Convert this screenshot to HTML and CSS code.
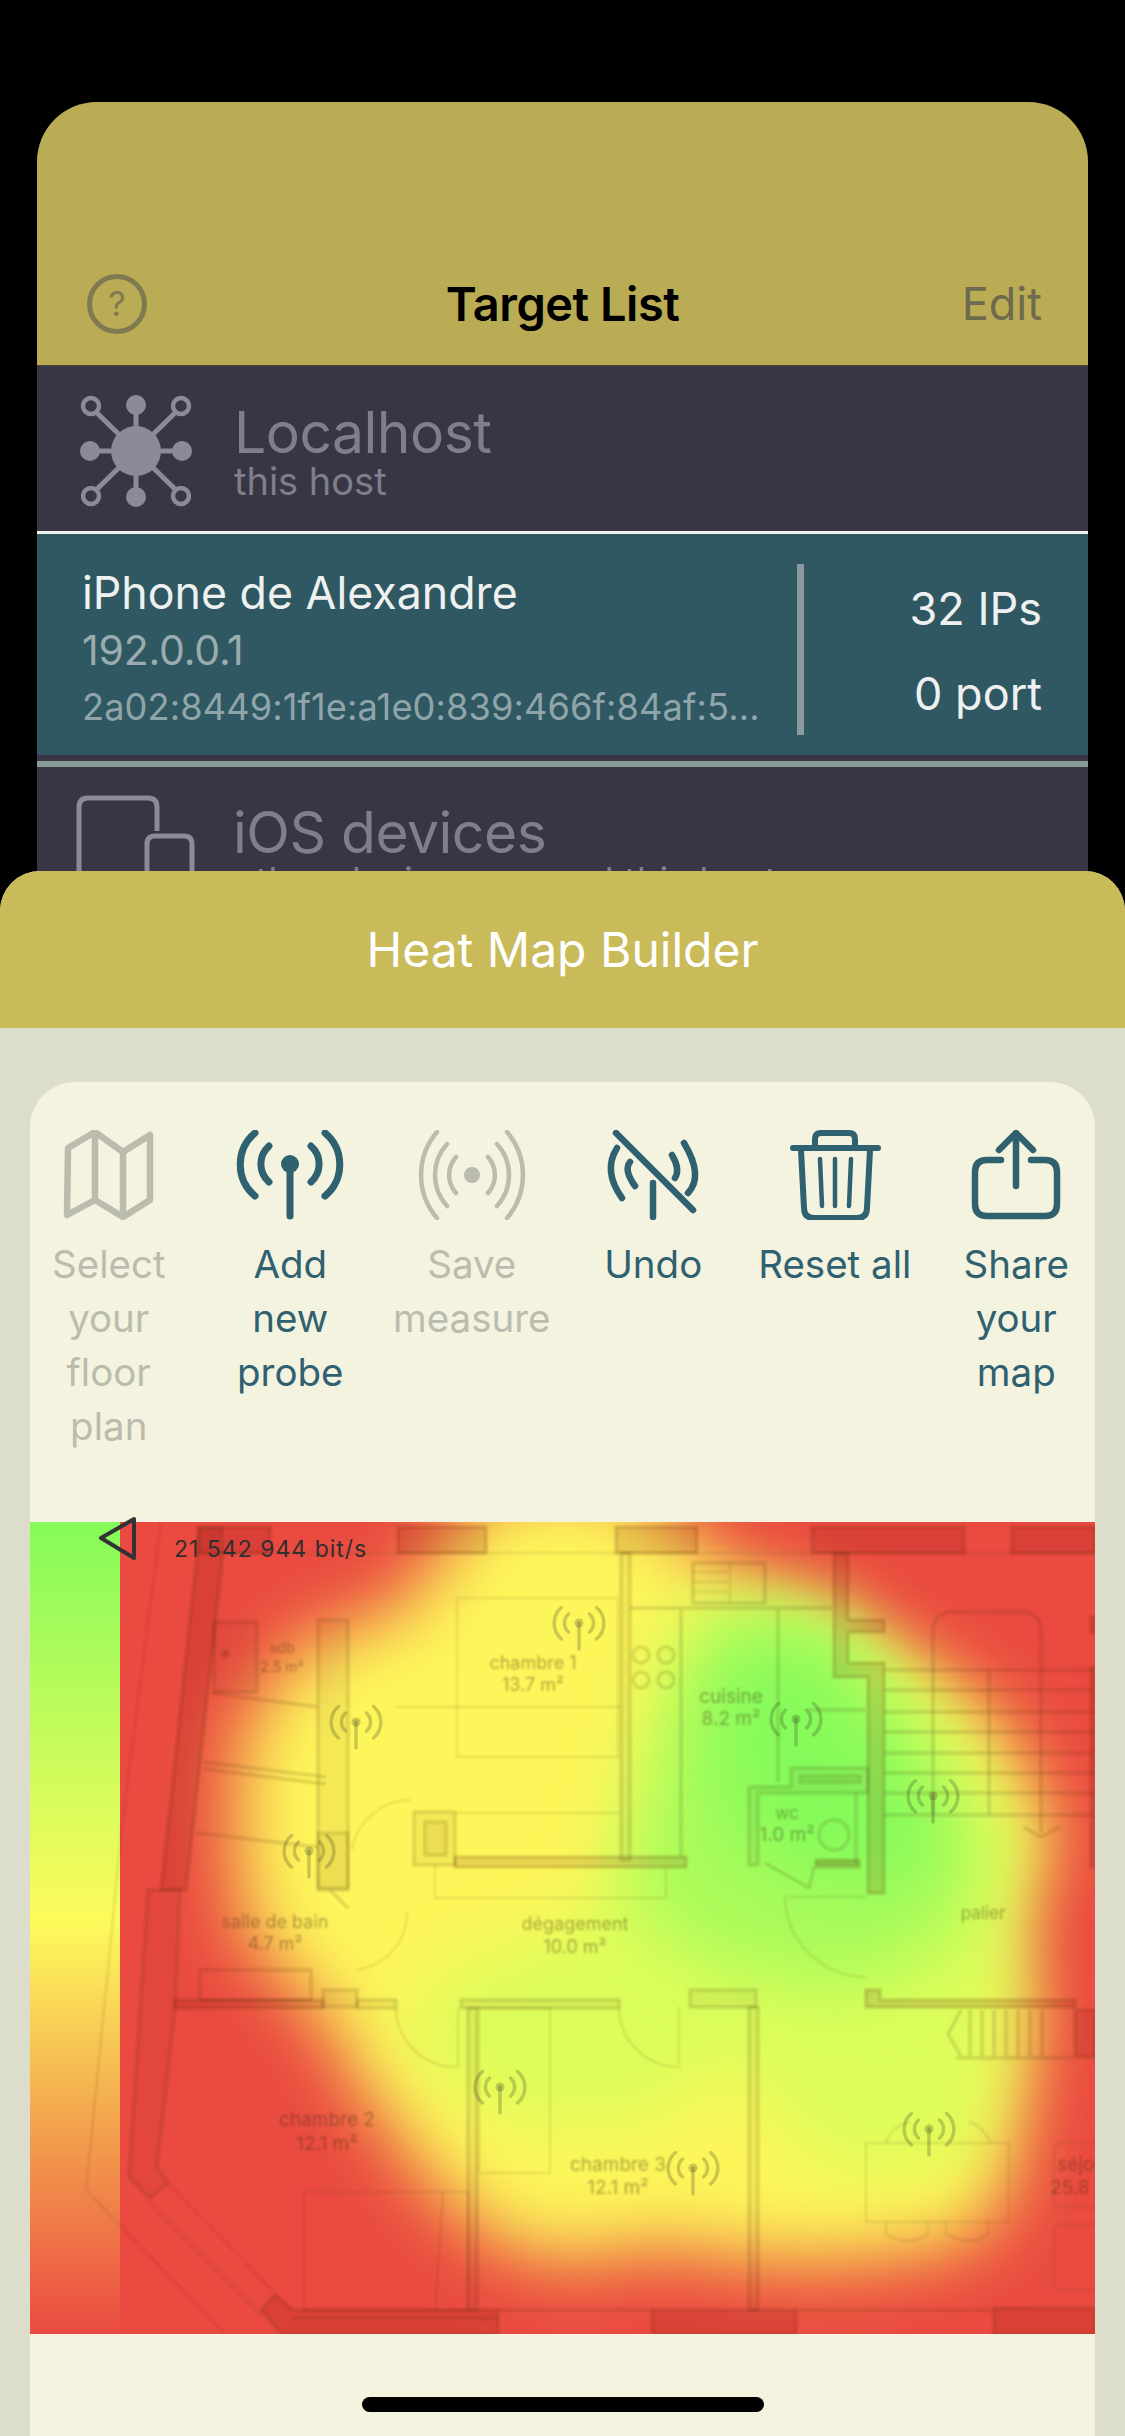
FILE: index.html
```html
<!DOCTYPE html>
<html lang="en">
<head>
<meta charset="utf-8">
<title>Heat Map Builder</title>
<link rel="stylesheet" href="styles.css">
</head>
<body>
<svg class="defs" width="0" height="0" aria-hidden="true">
  <defs>
    <g id="probe">
      <path d="M-35,-31 A41,41 0 0 0 -35,32 M35,-31 A41,41 0 0 1 35,32 M-21,-18 A24,24 0 0 0 -21,18 M21,-18 A24,24 0 0 1 21,18 M0,0 V52" fill="none" stroke="currentColor" stroke-width="7" stroke-linecap="round"/>
      <circle r="9" fill="currentColor"/>
    </g>
  </defs>
</svg>

<main class="behind">
  <header class="nav">
    <div class="help">?</div>
    <h1 class="nav-title">Target List</h1>
    <div class="edit">Edit</div>
  </header>
  <section class="row host">
    <svg class="row-icon" viewBox="0 0 116 116">
      <g class="ico-line">
        <path d="M58,58 L58,20 M58,58 L58,96 M58,58 L20,58 M58,58 L96,58 M58,58 L16,17 M58,58 L100,17 M58,58 L16,99 M58,58 L100,99"/>
        <circle class="ring" cx="13" cy="13" r="8"/><circle class="ring" cx="103" cy="13" r="8"/>
        <circle class="ring" cx="13" cy="103" r="8"/><circle class="ring" cx="103" cy="103" r="8"/>
      </g>
      <circle class="ico-fill" cx="58" cy="58" r="25"/>
      <circle class="ico-fill" cx="58" cy="12" r="10"/><circle class="ico-fill" cx="58" cy="104" r="10"/>
      <circle class="ico-fill" cx="12" cy="58" r="10"/><circle class="ico-fill" cx="104" cy="58" r="10"/>
    </svg>
    <div class="row-text">
      <div class="row-title">Localhost</div>
      <div class="row-sub">this host</div>
    </div>
  </section>
  <section class="target">
    <div class="target-info">
      <div class="target-name">iPhone de Alexandre</div>
      <div class="target-ip">192.0.0.1</div>
      <div class="target-addr">2a02:8449:1f1e:a1e0:839:466f:84af:5...</div>
    </div>
    <div class="target-count">
      <div>32 IPs</div>
      <div>0 port</div>
    </div>
  </section>
  <div class="rule"></div>
  <section class="row devices">
    <svg class="row-icon" viewBox="0 0 120 116">
      <path class="ico-line" d="M3,110 V12 Q3,3 12,3 H72 Q81,3 81,12 V36"/>
      <path class="ico-line" d="M71,110 V49 Q71,41 79,41 H108 Q116,41 116,49 V110"/>
    </svg>
    <div class="row-text">
      <div class="row-title">iOS devices</div>
      <div class="row-sub">other devices around this host</div>
    </div>
  </section>
</main>

<section class="sheet">
  <header class="sheet-head">Heat Map Builder</header>
  <div class="sheet-body">
    <div class="card">
      <div class="tools">
        <div class="tool off">
          <svg class="tool-icon" viewBox="0 0 120 90">
            <path d="M19,18 L46,2 L74,22 L101,5 V70 L74,87 L46,70 L18,85 Z M46,2 V70 M74,22 V87" fill="none" stroke="currentColor" stroke-width="6.5" stroke-linejoin="round"/>
          </svg>
          <div class="tool-label">Select<br>your<br>floor<br>plan</div>
        </div>
        <div class="tool">
          <svg class="tool-icon" viewBox="-60 -34 120 90"><use href="#probe"/></svg>
          <div class="tool-label">Add<br>new<br>probe</div>
        </div>
        <div class="tool off">
          <svg class="tool-icon" viewBox="-60 -45 120 90">
            <path d="M-35,-43 A66,66 0 0 0 -35,43 M35,-43 A66,66 0 0 1 35,43 M-25,-31 A46,46 0 0 0 -25,31 M25,-31 A46,46 0 0 1 25,31 M-16,-18 A27,27 0 0 0 -16,18 M16,-18 A27,27 0 0 1 16,18" fill="none" stroke="currentColor" stroke-width="4.5" stroke-linecap="round"/>
            <circle r="8" fill="currentColor"/>
          </svg>
          <div class="tool-label">Save<br>measure</div>
        </div>
        <div class="tool">
          <svg class="tool-icon" viewBox="0 0 120 90">
            <g fill="none" stroke="currentColor" stroke-width="6.5" stroke-linecap="round">
              <path d="M23,3 L100,80 M60,53 V87"/>
              <path d="M24,18 Q9.5,41 29,68 M37,32 Q30.5,40 42,56 M91,13 Q111,46 95,63 M79,25 Q87.5,39.5 82,48"/>
            </g>
          </svg>
          <div class="tool-label">Undo</div>
        </div>
        <div class="tool">
          <svg class="tool-icon" viewBox="0 0 120 90">
            <g fill="none" stroke="currentColor" stroke-linecap="round">
              <path stroke-width="6" d="M18,18 H103 M40,16 V9 Q40,3 46,3 H74 Q80,3 80,9 V16 M26,20 L29,78 Q29,88 39,88 H82 Q92,88 92,78 L95,20"/>
              <path stroke-width="4.5" d="M45,29 L47,76 M60,29 V76 M76,29 L74,76"/>
            </g>
          </svg>
          <div class="tool-label">Reset all</div>
        </div>
        <div class="tool">
          <svg class="tool-icon" viewBox="0 0 120 90">
            <g fill="none" stroke="currentColor" stroke-width="6.5" stroke-linecap="round" stroke-linejoin="round">
              <path d="M45,30 H31 Q19,30 19,42 V74 Q19,86 31,86 H89 Q101,86 101,74 V42 Q101,30 89,30 H75"/>
              <path d="M60,5 V56 M43,20 L60,3 L77,20"/>
            </g>
          </svg>
          <div class="tool-label">Share<br>your<br>map</div>
        </div>
      </div>

      <div class="map">
        <div class="scale"></div>
        <svg class="heat" viewBox="0 0 1065 812">
          <defs>
            <clipPath id="heat-clip"><rect x="90" y="0" width="975" height="812"/></clipPath>
            <filter id="b1" x="-30%" y="-30%" width="160%" height="160%"><feGaussianBlur stdDeviation="36"/></filter>
            <filter id="b2" x="-30%" y="-30%" width="160%" height="160%"><feGaussianBlur stdDeviation="34"/></filter>
            <filter id="soft"><feGaussianBlur stdDeviation="1.2"/></filter>
          </defs>
          <g clip-path="url(#heat-clip)">
            <rect x="90" width="975" height="812" fill="#ea4a40"/>
            <polygon filter="url(#b1)" fill="#fdf65a" points="462,-40 600,-40 700,50 840,120 960,190 1024,311 980,411 1003,491 990,591 970,691 926,725 818,741 746,741 620,725 548,741 470,725 398,658 327,558 291,491 215,411 205,311 210,211 272,121 368,88"/>
            <polygon filter="url(#b2)" fill="#dcfd5a" points="610,240 650,80 790,80 900,170 985,300 985,460 950,640 800,650 700,540 620,600 480,600 370,520 420,450 560,400"/>
            <polygon filter="url(#b2)" fill="#a8fb5a" points="640,180 700,90 800,100 880,200 950,330 920,420 820,470 680,440 600,380"/>
            <polygon filter="url(#b2)" fill="#84fb5a" points="690,130 790,130 850,220 910,300 890,360 780,360 690,290"/>
          </g>
          <g filter="url(#soft)">
            <!-- exterior thin outline -->
            <path class="thin" d="M131,0 L91,311 L77,458 L56,668 L195,812 M138,661 L245,771 M116,678 L231,793"/>
            <!-- left wall -->
            <polygon class="thick" points="170,6 192,6 192,40 156,368 131,368"/>
            <polygon class="wall" points="118,368 150,368 145,486 127,645 138,661 120,676 99,655"/>
            <!-- top strip -->
            <path class="thin" d="M168,31 H1065"/>
            <rect class="thick" x="168" y="5" width="72" height="26"/>
            <rect class="thick" x="368" y="5" width="88" height="26"/>
            <rect class="thick" x="586" y="5" width="81" height="26"/>
            <rect class="thick" x="782" y="5" width="152" height="26"/>
            <rect class="thick" x="982" y="5" width="83" height="26"/>
            <!-- bathroom side rooms -->
            <rect class="wall" x="184" y="100" width="43" height="70"/>
            <circle class="thick" cx="195" cy="132" r="3"/>
            <path class="line" d="M181,171 L288,185 M174,240 L296,255 M174,247 L296,262 M166,311 L288,325"/>
            <rect class="wall" x="288" y="98" width="30" height="270"/>
            <rect class="wall" x="288" y="311" width="30" height="55"/>
            <path class="line" d="M300,368 L318,386"/>
            <path class="thin" d="M381,278 A60,60 0 0 0 322,328 M377,390 A58,58 0 0 1 327,448"/>
            <path class="thin" d="M365,185 H590"/>
            <!-- chimney and corridor wall -->
            <rect class="wall" x="384" y="290" width="41" height="53"/>
            <rect class="wall" x="395" y="300" width="21" height="33"/>
            <rect class="thick" x="425" y="335" width="231" height="10"/>
            <path class="thin" d="M425,291 H590 M405,343 V376 H636 V345"/>
            <rect class="thin" x="427" y="76" width="161" height="159"/>
            <!-- kitchen -->
            <rect class="wall" x="591" y="31" width="9" height="307"/>
            <path class="line" d="M600,86 H802 M651,86 V335 M748,86 V260"/>
            <rect class="line" x="663" y="41" width="72" height="40"/>
            <path class="thin" d="M663,50 H700 M663,60 H700 M663,70 H700 M700,41 V81"/>
            <circle class="line" cx="611" cy="133" r="8"/><circle class="line" cx="636" cy="133" r="8"/>
            <circle class="line" cx="611" cy="158" r="8"/><circle class="line" cx="636" cy="158" r="8"/>
            <!-- stair block -->
            <path class="thick" d="M804,31 H818 V98 H854 V110 H818 V141 H854 V371 H838 V155 H804 Z"/>
            <path class="line" d="M854,148 H1065 M854,168 H1065 M854,190 H1065 M854,210 H1065 M854,231 H1065 M854,251 H1065 M854,271 H1065 M854,293 H1065"/>
            <path class="line" d="M959,148 V293 M903,293 V110 Q903,90 923,90 H991 Q1011,90 1011,110 V311 M994,305 L1011,315 L1030,305"/>
            <rect class="thick" x="1061" y="95" width="8" height="16"/>
            <rect class="thick" x="1061" y="145" width="8" height="200"/>
            <!-- wc -->
            <path class="wall" d="M719,265 H761 V246 H838 V271 H728 V343 H719 Z"/>
            <rect class="wall" x="770" y="254" width="60" height="6"/>
            <path class="line" d="M779,188 H836 M786,341 H829 M826,271 V341"/>
            <rect class="thick" x="786" y="338" width="43" height="7"/>
            <circle class="line" cx="804" cy="313" r="15"/>
            <path class="line" d="M735,341 L779,366 L784,345"/>
            <path class="thin" d="M755,375 H836 M755,375 A82,82 0 0 0 836,455"/>
            <!-- lower walls -->
            <rect class="thick" x="145" y="478" width="148" height="8"/>
            <rect class="wall" x="293" y="468" width="34" height="17"/>
            <rect class="wall" x="327" y="478" width="39" height="8"/>
            <rect class="wall" x="431" y="478" width="158" height="8"/>
            <rect class="wall" x="660" y="468" width="66" height="17"/>
            <polygon class="thick" points="836,468 850,468 850,478 1045,478 1045,485 836,485"/>
            <rect class="thick" x="1045" y="488" width="20" height="47"/>
            <rect class="line" x="170" y="448" width="111" height="30"/>
            <rect class="wall" x="438" y="486" width="9" height="302"/>
            <rect class="wall" x="719" y="485" width="9" height="303"/>
            <rect class="thin" x="449" y="486" width="71" height="165"/>
            <path class="thin" d="M366,486 A60,60 0 0 0 428,545 V486 M589,485 A60,60 0 0 0 649,545 V485"/>
            <path class="line" d="M926,536 H1042 M931,488 L918,512 L931,534 M940,488 V536 M952,488 V536 M964,488 V536 M976,488 V536 M988,488 V536 M1000,488 V536 M1012,488 V536"/>
            <!-- bottom wall -->
            <polygon class="thick" points="245,773 263,788 468,788 468,812 252,812 231,788"/>
            <path class="line" d="M262,796 H468 M468,788 H622 M766,788 H964"/>
            <rect class="thick" x="622" y="788" width="144" height="24"/>
            <rect class="thick" x="964" y="786" width="101" height="26"/>
            <rect class="thin" x="274" y="670" width="164" height="118"/>
            <path class="thin" d="M413,670 L405,788"/>
            <!-- furniture -->
            <rect class="thin" x="836" y="621" width="143" height="79"/>
            <path class="thin" d="M856,621 A30,30 0 0 1 880,600 M939,600 A30,30 0 0 1 960,621 M856,700 V712 Q880,726 898,712 V700 M916,700 V712 Q940,726 958,712 V700"/>
            <rect class="thin" x="1024" y="621" width="60" height="64" rx="6"/>
            <rect class="thin" x="1024" y="703" width="60" height="65" rx="6"/>
            <!-- room labels -->
            <g class="lbl">
              <text x="252" y="131" font-size="14">sdb</text><text x="252" y="150" font-size="14">2.5 m²</text>
              <text x="503" y="147" font-size="18">chambre 1</text><text x="503" y="169" font-size="18">13.7 m²</text>
              <text x="701" y="181" font-size="19">cuisine</text><text x="701" y="203" font-size="19">8.2 m²</text>
              <text x="757" y="297" font-size="17">wc</text><text x="757" y="319" font-size="19">1.0 m²</text>
              <text x="953" y="397" font-size="17">palier</text>
              <text x="545" y="408" font-size="18">dégagement</text><text x="545" y="431" font-size="18">10.0 m²</text>
              <text x="245" y="406" font-size="18">salle de bain</text><text x="245" y="428" font-size="18">4.7 m²</text>
              <text x="297" y="604" font-size="19">chambre 2</text><text x="297" y="628" font-size="19">12.1 m²</text>
              <text x="588" y="649" font-size="19">chambre 3</text><text x="588" y="672" font-size="19">12.1 m²</text>
              <text x="1055" y="649" font-size="19">séjour</text><text x="1055" y="672" font-size="19">25.8 m²</text>
            </g>
          </g>
          <g class="map-probes">
            <use href="#probe" transform="translate(326,200) scale(.5)"/>
            <use href="#probe" transform="translate(279,329) scale(.5)"/>
            <use href="#probe" transform="translate(549,101) scale(.5)"/>
            <use href="#probe" transform="translate(766,197) scale(.5)"/>
            <use href="#probe" transform="translate(903,274) scale(.5)"/>
            <use href="#probe" transform="translate(470,565) scale(.5)"/>
            <use href="#probe" transform="translate(663,646) scale(.5)"/>
            <use href="#probe" transform="translate(899,607) scale(.5)"/>
          </g>
        </svg>
        <svg class="marker" viewBox="0 0 44 48"><path d="M38,3 L5,22 L38,42 Z" fill="none" stroke="#333" stroke-width="4" stroke-linejoin="round"/></svg>
        <div class="rate">21 542 944 bit/s</div>
      </div>
    </div>
  </div>
</section>
<div class="home"></div>
</body>
</html>
```
FILE: styles.css
```css
* { box-sizing: border-box; }
html, body { margin: 0; padding: 0; }
body {
  width: 1125px;
  height: 2436px;
  position: relative;
  overflow: hidden;
  background: #000;
  font-family: Inter, "Noto Sans", "Liberation Sans", sans-serif;
  padding-top: 102px;
}
.defs { position: absolute; }

.behind {
  margin: 0 37px;
  height: 900px;
  background: #383545;
  border-radius: 60px 60px 0 0;
  overflow: hidden;
}
.nav {
  height: 264px;
  padding: 140px 46px 0 46px;
  background: #baac54;
  border-bottom: 1px solid #4a4738;
  display: grid;
  grid-template-columns: 1fr auto 1fr;
  align-items: center;
}
.help {
  width: 60px;
  height: 60px;
  margin-left: 4px;
  border: 5px solid #807a52;
  border-radius: 50%;
  color: #807a52;
  font-size: 34px;
  line-height: 50px;
  text-align: center;
}
.nav-title {
  margin: 0;
  font-size: 47px;
  font-weight: 600;
  letter-spacing: -0.5px;
  color: #000;
}
.edit {
  justify-self: end;
  font-size: 45px;
  color: #6d6a4e;
}

.row { display: flex; }
.row-icon { flex: none; }
.ico-line { fill: none; stroke: #8b8b97; stroke-width: 5; }
.ring { stroke-width: 4.5; fill: #383545; }
.ico-fill { fill: #8b8b97; }
.row-text { color: #7f7f8b; white-space: nowrap; }
.row-title { font-size: 57px; line-height: 55px; letter-spacing: -0.5px; }
.row-sub { font-size: 38px; line-height: 42px; }

.host {
  height: 168px;
  padding: 39px 0 0 39px;
  border-bottom: 3px solid #f2f2ee;
}
.host .row-icon { width: 116px; height: 116px; margin: -12px 40px 0 2px; }

.target {
  height: 221px;
  background: #2f5863;
  display: flex;
  padding-top: 30px;
}
.target-info { width: 760px; padding-left: 45px; }
.target-name { font-size: 44.7px; line-height: 58px; color: #eef1f0; }
.target-ip { font-size: 41px; line-height: 56px; color: #9aacaf; letter-spacing: -0.2px; }
.target-addr { font-size: 36.2px; line-height: 58px; color: #8fa5a9; letter-spacing: 0.1px; white-space: nowrap; }
.target-count {
  width: 291px;
  height: 171px;
  border-left: 7px solid #8a9a9f;
  padding: 2px 46px 0 0;
  text-align: right;
  font-size: 45px;
  line-height: 85px;
  color: #eef1f0;
}

.rule {
  height: 12px;
  border-top: 6px solid #383545;
  background: #8a9b9a;
}
.devices { padding: 38px 0 0 39px; }
.devices .row-icon { width: 120px; height: 116px; margin: -10px 37px 0 0; }

.sheet {
  position: absolute;
  top: 871px;
  left: 0;
  width: 1125px;
  height: 1565px;
  border-radius: 40px 40px 0 0;
  overflow: hidden;
  background: #dcddcb;
}
.sheet-head {
  height: 157px;
  background: #cabb5a;
  color: #fff;
  font-size: 48px;
  display: flex;
  align-items: center;
  justify-content: center;
}
.sheet-body { padding: 54px 30px 0; }
.card {
  height: 1400px;
  background: #f3f3df;
  border-radius: 45px 45px 0 0;
}
.tools {
  height: 440px;
  margin: 0 -12px;
  padding-top: 48px;
  display: grid;
  grid-template-columns: repeat(6, 1fr);
  align-content: start;
}
.tool { display: flex; flex-direction: column; align-items: center; color: #2f6170; }
.tool.off { color: #bbbcae; }
.tool-icon { width: 120px; height: 90px; }
.tool-label {
  margin-top: 17px;
  font-size: 38.5px;
  line-height: 54px;
  text-align: center;
  white-space: nowrap;
}

.map { position: relative; width: 1065px; height: 812px; }
.scale {
  position: absolute;
  left: 0; top: 0;
  width: 90px; height: 812px;
  background: linear-gradient(#84fb5a 0%, #fdfb5c 49%, #ea4a40 100%);
}
.heat { position: absolute; left: 0; top: 0; width: 1065px; height: 812px; }
.heat text { font-family: Inter, sans-serif; text-anchor: middle; fill: rgba(60, 40, 20, .38); stroke: none; }
.thin { fill: none; stroke: rgba(70, 40, 20, .12); stroke-width: 2; }
.line { fill: none; stroke: rgba(70, 40, 20, .17); stroke-width: 3; }
.wall { fill: rgba(70, 40, 20, .05); stroke: rgba(70, 40, 20, .17); stroke-width: 3; }
.thick { fill: rgba(110, 20, 10, .13); stroke: rgba(90, 30, 10, .2); stroke-width: 3; }
.map-probes { color: rgba(60, 60, 40, .26); }
.marker { position: absolute; left: 66px; top: -6px; width: 44px; height: 48px; }
.rate {
  position: absolute;
  left: 144px;
  top: 13px;
  font-size: 23px;
  line-height: 28px;
  letter-spacing: 1px;
  color: #2f2f2f;
  white-space: nowrap;
}
.home {
  position: absolute;
  left: 362px;
  top: 2397px;
  width: 402px;
  height: 15px;
  border-radius: 8px;
  background: #000;
}
```
